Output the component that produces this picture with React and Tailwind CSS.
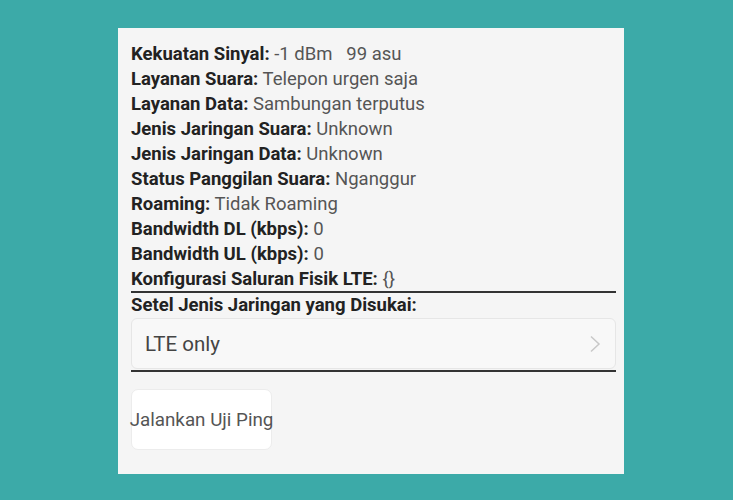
export default function App() {
  const rows = [
    ["Kekuatan Sinyal:", "-1 dBm   99 asu"],
    ["Layanan Suara:", "Telepon urgen saja"],
    ["Layanan Data:", "Sambungan terputus"],
    ["Jenis Jaringan Suara:", "Unknown"],
    ["Jenis Jaringan Data:", "Unknown"],
    ["Status Panggilan Suara:", "Nganggur"],
    ["Roaming:", "Tidak Roaming"],
    ["Bandwidth DL (kbps):", "0"],
    ["Bandwidth UL (kbps):", "0"],
  ];
  return (
    <div
      className="w-full h-[500px] bg-[#3caaa8] pt-[28px] pl-[118px]"
      style={{ fontFamily: "Roboto, 'Noto Sans', sans-serif" }}
    >
      <div className="w-[506px] h-[446px] bg-[#f5f5f5] pl-[13px] pr-[8px] pt-[14px]">
        <div className="text-[18.5px] leading-[25px]">
          {rows.map(([k, v]) => (
            <div key={k} className="whitespace-pre">
              <span className="font-bold text-[#222]">{k}</span>
              <span className="text-[#555]"> {v}</span>
            </div>
          ))}
          <div className="whitespace-pre border-b-2 border-[#333] leading-[24px]">
            <span className="font-bold text-[#222]">Konfigurasi Saluran Fisik LTE:</span>
            <span className="text-[#555]"> {"{}"}</span>
          </div>
          <div className="font-bold text-[#222] leading-[25px]">
            Setel Jenis Jaringan yang Disukai:
          </div>
        </div>
        <div className="border-b-2 border-[#333] pb-[1px]">
          <div className="h-[51px] rounded-[6px] border border-[#e6e6e6] bg-[#f8f8f8] flex items-center justify-between pl-[13px] pr-[14px]">
            <span className="text-[20.5px] text-[#444] pt-[2px]">LTE only</span>
            <svg width="12" height="18" viewBox="0 0 12 18" fill="none">
              <path d="M2 1.5L10 9L2 16.5" stroke="#c8c8c8" strokeWidth="1.5" />
            </svg>
          </div>
        </div>
        <div className="mt-[17px] w-[141px] h-[61px] rounded-[7px] border border-[#ececec] bg-white flex items-center justify-center">
          <span className="text-[18.8px] text-[#555] whitespace-nowrap pt-[1px]">Jalankan Uji Ping</span>
        </div>
      </div>
    </div>
  );
}
